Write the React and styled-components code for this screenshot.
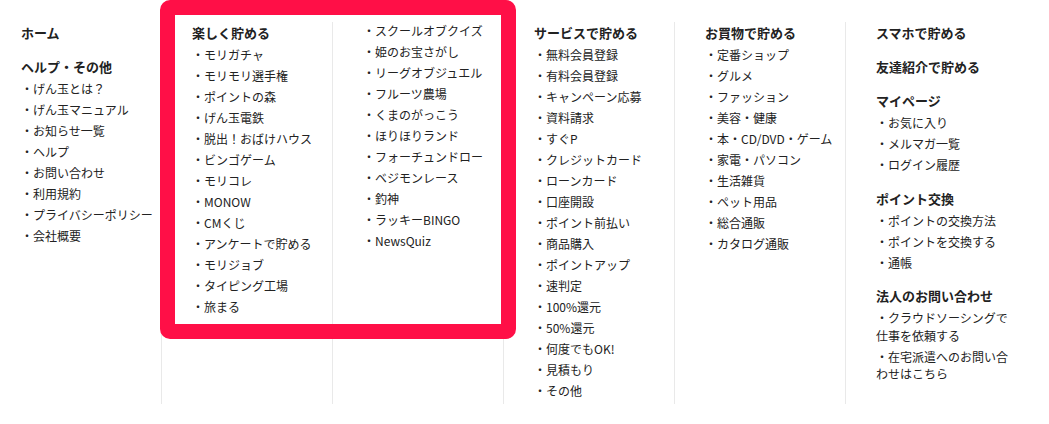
import React from 'react'
import styled, { createGlobalStyle } from 'styled-components'

const GlobalStyle = createGlobalStyle`
    body {
        margin: 0;
        background: #fff;
        font-family: "Noto Sans CJK JP", "Noto Sans", sans-serif;
        color: #222;
    }
`

const Page = styled.div`
    position: relative;
    width: 1049px;
    height: 424px;
    overflow: hidden;
`

const Columns = styled.div`
    display: flex;
    padding-top: 22px;
`

const Column = styled.div`
    box-sizing: border-box;
    width: ${p => (p.first ? '161px' : '171px')};
    padding: 2px 0 4px ${p => (p.first ? '21px' : '30px')};
    border-left: ${p => (p.first ? 'none' : '1px solid #e9e9e9')};
    display: flex;
    flex-direction: column;
    gap: 16px;
`

const Section = styled.div`
    display: flex;
    flex-direction: column;
`

const Heading = styled.h3`
    margin: 0;
    font-size: 13px;
    font-weight: 700;
    line-height: 18px;
    color: #222;
`

const List = styled.ul`
    list-style: none;
    margin: ${p => (p.bare ? '-2px 0 0' : '4px 0 0')};
    padding: 0;
    display: flex;
    flex-direction: column;
    gap: 3.5px;
`

const Item = styled.li`
    font-size: 12px;
    line-height: 17.5px;
    color: #222;
`

const Highlight = styled.div`
    position: absolute;
    left: 160px;
    top: 0;
    width: 356px;
    height: 339px;
    box-sizing: border-box;
    border: 15px solid #ff0f47;
    border-radius: 10px;
    pointer-events: none;
`

const columns = [
    [
        { title: 'ホーム', items: [] },
        {
            title: 'ヘルプ・その他',
            items: ['げん玉とは？', 'げん玉マニュアル', 'お知らせ一覧', 'ヘルプ', 'お問い合わせ', '利用規約', 'プライバシーポリシー', '会社概要'],
        },
    ],
    [
        {
            title: '楽しく貯める',
            items: ['モリガチャ', 'モリモリ選手権', 'ポイントの森', 'げん玉電鉄', '脱出！おばけハウス', 'ビンゴゲーム', 'モリコレ', 'MONOW', 'CMくじ', 'アンケートで貯める', 'モリジョブ', 'タイピング工場', '旅まる'],
        },
    ],
    [
        {
            items: ['スクールオブクイズ', '姫のお宝さがし', 'リーグオブジュエル', 'フルーツ農場', 'くまのがっこう', 'ほりほりランド', 'フォーチュンドロー', 'ベジモンレース', '釣神', 'ラッキーBINGO', 'NewsQuiz'],
        },
    ],
    [
        {
            title: 'サービスで貯める',
            items: ['無料会員登録', '有料会員登録', 'キャンペーン応募', '資料請求', 'すぐP', 'クレジットカード', 'ローンカード', '口座開設', 'ポイント前払い', '商品購入', 'ポイントアップ', '速判定', '100%還元', '50%還元', '何度でもOK!', '見積もり', 'その他'],
        },
    ],
    [
        {
            title: 'お買物で貯める',
            items: ['定番ショップ', 'グルメ', 'ファッション', '美容・健康', '本・CD/DVD・ゲーム', '家電・パソコン', '生活雑貨', 'ペット用品', '総合通販', 'カタログ通販'],
        },
    ],
    [
        { title: 'スマホで貯める', items: [] },
        { title: '友達紹介で貯める', items: [] },
        { title: 'マイページ', items: ['お気に入り', 'メルマガ一覧', 'ログイン履歴'] },
        { title: 'ポイント交換', items: ['ポイントの交換方法', 'ポイントを交換する', '通帳'] },
        { title: '法人のお問い合わせ', items: ['クラウドソーシングで仕事を依頼する', '在宅派遣へのお問い合わせはこちら'] },
    ],
]

const App = () => {
    return (
        <Page>
            <GlobalStyle />
            <Columns>
                {columns.map((sections, i) => (
                    <Column key={i} first={i === 0}>
                        {sections.map((s, j) => (
                            <Section key={j}>
                                {s.title && <Heading>{s.title}</Heading>}
                                {s.items.length > 0 && (
                                    <List bare={!s.title}>
                                        {s.items.map(item => (
                                            <Item key={item}>・{item}</Item>
                                        ))}
                                    </List>
                                )}
                            </Section>
                        ))}
                    </Column>
                ))}
            </Columns>
            <Highlight />
        </Page>
    )
}

export default App
